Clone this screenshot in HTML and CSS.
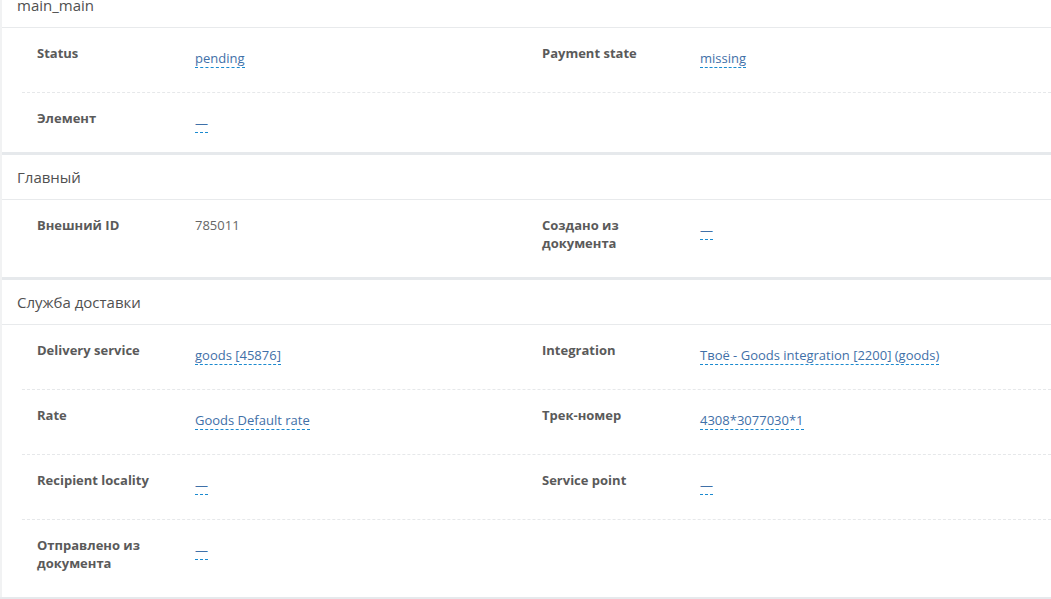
FILE: index.html
```html
<!DOCTYPE html>
<html lang="ru">
<head>
<meta charset="utf-8">
<title>Order</title>
<link rel="stylesheet" href="styles.css">
</head>
<body>
<div class="page">
  <section class="panel">
    <div class="panel-head">main_main</div>
    <div class="row">
      <div class="cell"><div class="label">Status</div><div class="value"><a class="link">pending</a></div></div>
      <div class="cell"><div class="label">Payment state</div><div class="value"><a class="link">missing</a></div></div>
    </div>
    <div class="row">
      <div class="cell"><div class="label">Элемент</div><div class="value"><a class="link">—</a></div></div>
      <div class="cell"></div>
    </div>
  </section>
  <section class="panel">
    <div class="panel-head">Главный</div>
    <div class="row">
      <div class="cell"><div class="label">Внешний ID</div><div class="value plain">785011</div></div>
      <div class="cell"><div class="label">Создано из документа</div><div class="value"><a class="link">—</a></div></div>
    </div>
  </section>
  <section class="panel">
    <div class="panel-head">Служба доставки</div>
    <div class="row">
      <div class="cell"><div class="label">Delivery service</div><div class="value"><a class="link">goods [45876]</a></div></div>
      <div class="cell"><div class="label">Integration</div><div class="value"><a class="link">Твоё - Goods integration [2200] (goods)</a></div></div>
    </div>
    <div class="row">
      <div class="cell"><div class="label">Rate</div><div class="value"><a class="link">Goods Default rate</a></div></div>
      <div class="cell"><div class="label">Трек-номер</div><div class="value"><a class="link">4308*3077030*1</a></div></div>
    </div>
    <div class="row">
      <div class="cell"><div class="label">Recipient locality</div><div class="value"><a class="link">—</a></div></div>
      <div class="cell"><div class="label">Service point</div><div class="value"><a class="link">—</a></div></div>
    </div>
    <div class="row">
      <div class="cell"><div class="label">Отправлено из документа</div><div class="value"><a class="link">—</a></div></div>
      <div class="cell"></div>
    </div>
  </section>
</div>
</body>
</html>
```
FILE: styles.css
```css
html, body {
  margin: 0;
  padding: 0;
  background: #e6e9ec;
  font-family: "Open Sans", "Noto Sans", sans-serif;
  font-size: 13px;
  line-height: 18px;
  color: #555;
  overflow: hidden;
}
.page {
  margin-top: -17px;
  border-left: 2px solid #f1f2f3;
  display: flex;
  flex-direction: column;
  gap: 3px;
}
.panel {
  background: #fff;
}
.panel-head {
  height: 44px;
  box-sizing: content-box;
  display: flex;
  align-items: center;
  padding-left: 15px;
  font-size: 15px;
  color: #505050;
  border-bottom: 1px solid #e8eaec;
}
.row {
  margin-left: 20px;
  display: grid;
  grid-template-columns: 505px 1fr;
  padding: 16px 0 25px;
  border-bottom: 1px dashed #e6e8ea;
}
.row:last-child {
  padding-bottom: 20px;
  border-bottom: none;
}
.cell {
  display: flex;
  align-items: flex-start;
  padding-left: 15px;
}
.label {
  width: 140px;
  padding-right: 18px;
  padding-bottom: 5px;
  font-weight: 700;
  color: #5a5a5a;
}
.value {
  padding-top: 5px;
}
.value.plain {
  padding-top: 0;
  color: #666;
}
.link {
  color: #3f70a8;
  text-decoration: none;
  border-bottom: 1px dashed #1a8ad0;
  cursor: pointer;
}
```
